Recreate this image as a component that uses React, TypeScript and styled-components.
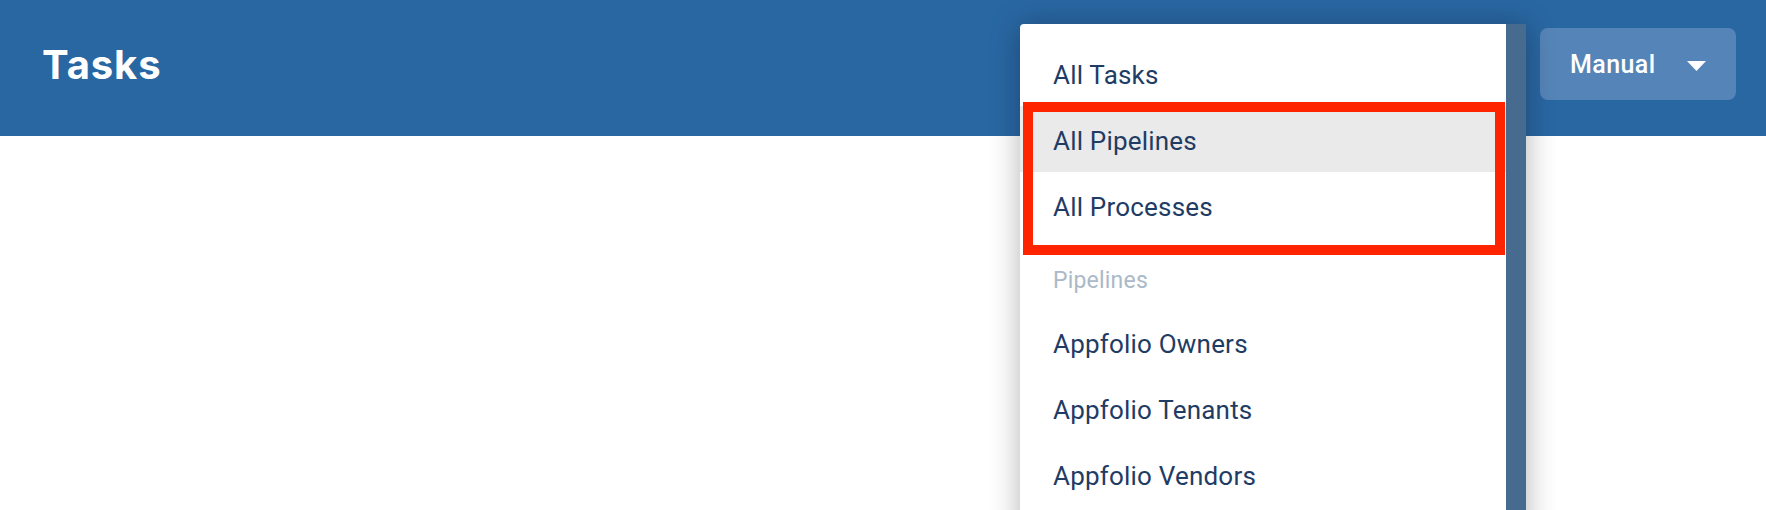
import styled, { createGlobalStyle } from "styled-components";

const GlobalStyle = createGlobalStyle`
  html, body {
    margin: 0;
    padding: 0;
    height: 510px;
    overflow: hidden;
    background: #ffffff;
    font-family: Roboto, "Liberation Sans", sans-serif;
  }
`;

type MenuEntry =
  | { kind: "item"; label: string; active?: boolean }
  | { kind: "group"; label: string };

const menuEntries: MenuEntry[] = [
  { kind: "item", label: "All Tasks" },
  { kind: "item", label: "All Pipelines", active: true },
  { kind: "item", label: "All Processes" },
  { kind: "group", label: "Pipelines" },
  { kind: "item", label: "Appfolio Owners" },
  { kind: "item", label: "Appfolio Tenants" },
  { kind: "item", label: "Appfolio Vendors" },
];

export default function App() {
  return (
    <Page>
      <GlobalStyle />
      <TopBar>
        <Title>Tasks</Title>
        <ModeButton type="button">
          <span>Manual</span>
          <Caret width="19" height="10" viewBox="0 0 19 10">
            <path d="M0 0h19L9.5 10z" fill="#ffffff" />
          </Caret>
        </ModeButton>
      </TopBar>
      <Content />

      <Menu>
        <MenuList>
          {menuEntries.map((entry) =>
            entry.kind === "group" ? (
              <GroupLabel key={entry.label}>{entry.label}</GroupLabel>
            ) : (
              <MenuItem key={entry.label} $active={entry.active}>
                {entry.label}
              </MenuItem>
            )
          )}
        </MenuList>
        <ScrollTrack />
        <Highlight />
      </Menu>
    </Page>
  );
}

const Page = styled.div`
  position: relative;
  width: 1766px;
  height: 510px;
  overflow: hidden;
`;

const TopBar = styled.header`
  height: 136px;
  background: #2967a3;
  display: flex;
  align-items: center;
  justify-content: space-between;
  padding: 0 30px 8px 42px;
  box-sizing: border-box;
`;

const Title = styled.h1`
  margin: 0;
  font-family: Inter, "Open Sans", sans-serif;
  font-weight: 700;
  font-size: 40px;
  letter-spacing: 0.9px;
  color: #ffffff;
`;

const ModeButton = styled.button`
  width: 196px;
  height: 72px;
  border: none;
  border-radius: 8px;
  background: #5585b8;
  color: #ffffff;
  display: flex;
  align-items: center;
  justify-content: space-between;
  padding: 0 30px;
  box-sizing: border-box;
  font-family: Roboto, sans-serif;
  font-weight: 500;
  font-size: 25px;
  letter-spacing: 0.4px;
  cursor: pointer;
`;

const Caret = styled.svg`
  display: block;
  margin-top: 3px;
`;

const Content = styled.main`
  height: 374px;
  background: #ffffff;
`;

const Menu = styled.div`
  position: absolute;
  top: 24px;
  left: 1020px;
  height: 540px;
  display: flex;
  border-top-left-radius: 4px;
  box-shadow: 0 2px 30px rgba(0, 0, 0, 0.3);
`;

const MenuList = styled.ul`
  width: 486px;
  margin: 0;
  padding: 16px 0 0;
  list-style: none;
  background: #ffffff;
  border-top-left-radius: 4px;
`;

const MenuItem = styled.li<{ $active?: boolean }>`
  height: 66px;
  box-sizing: border-box;
  display: flex;
  align-items: center;
  padding: 3px 0 0 33px;
  font-size: 26px;
  letter-spacing: 0.2px;
  color: #1f3c64;
  background: ${(p) => (p.$active ? "#eaeaea" : "transparent")};
`;

const GroupLabel = styled.li`
  height: 71px;
  box-sizing: border-box;
  padding: 31px 0 0 33px;
  font-size: 23px;
  line-height: 1;
  letter-spacing: 0.2px;
  color: #aab9c8;
`;

const ScrollTrack = styled.div`
  width: 20px;
  background: #476a8f;
`;

const Highlight = styled.div`
  position: absolute;
  left: 3px;
  top: 78px;
  width: 482px;
  height: 153px;
  box-sizing: border-box;
  border: 10px solid #ff2400;
  pointer-events: none;
`;
